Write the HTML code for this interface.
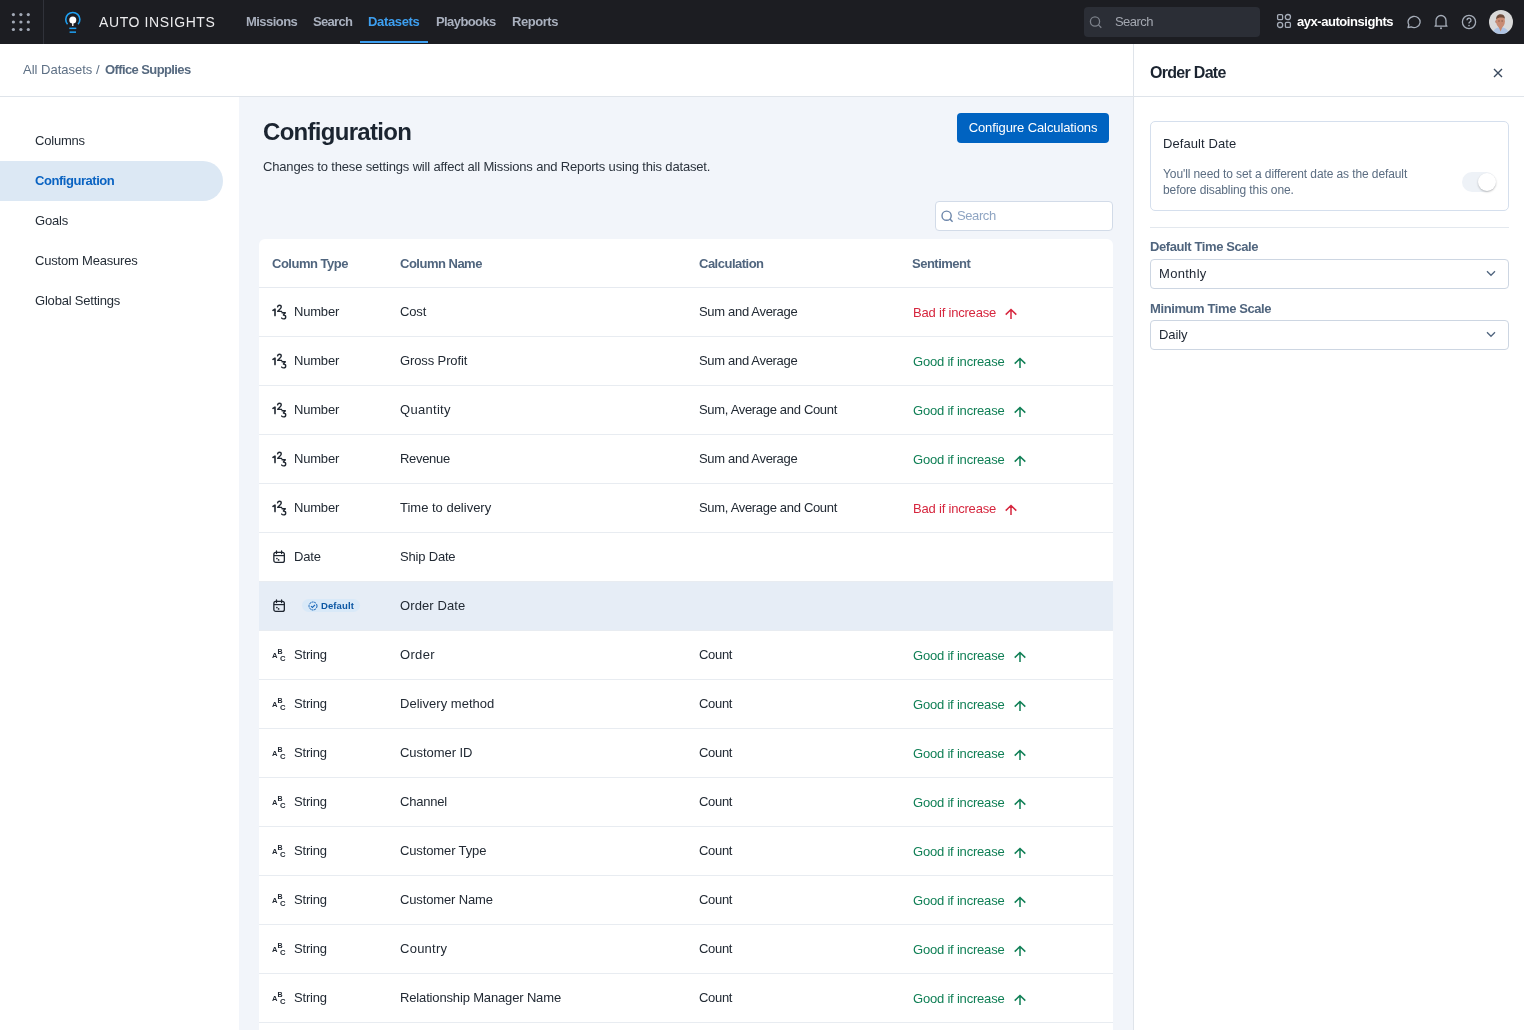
<!DOCTYPE html>
<html><head><meta charset="utf-8">
<style>
*{box-sizing:border-box;margin:0;padding:0}
html,body{width:1524px;height:1030px;overflow:hidden;background:#fff;font-family:"Liberation Sans",sans-serif;color:#2a323c}
.abs{position:absolute}
#nav{position:absolute;left:0;top:0;width:1524px;height:44px;background:#1c1d22}
#nav .sep{position:absolute;left:43px;top:0;width:1px;height:44px;background:#30323a}
.dot{position:absolute;width:3.2px;height:3.2px;border-radius:50%;background:#a2a9b6}
.brand{position:absolute;left:99px;top:13px;font-size:14px;line-height:18px;letter-spacing:0.6px;color:#ececee;white-space:nowrap}
.mi{position:absolute;top:13px;font-size:13px;font-weight:700;line-height:18px;color:#a9b0be;white-space:nowrap;letter-spacing:-0.5px}
.mi.act{color:#3d9ff0}
.uline{position:absolute;left:360px;top:41px;width:68px;height:2px;background:#3d9ff0}
.nsearch{position:absolute;left:1084px;top:7px;width:176px;height:30px;border-radius:4px;background:#2b2e36}
.nsearch span{position:absolute;left:31px;top:6px;font-size:13px;line-height:18px;color:#a3a7b0;letter-spacing:-0.55px}
.org{position:absolute;left:1297px;top:13px;font-size:13px;font-weight:700;line-height:18px;color:#fff;letter-spacing:-0.45px;white-space:nowrap}
#crumb{position:absolute;left:0;top:44px;width:1524px;height:53px;background:#fff;border-bottom:1px solid #dfe4ea}
.cr{position:absolute;top:16px;font-size:13px;line-height:18px;white-space:nowrap;color:#5e7085}
#side{position:absolute;left:0;top:97px;width:239px;height:933px;background:#fff}
.si{position:absolute;left:35px;font-size:13px;line-height:40px;height:40px;color:#252d37;white-space:nowrap;letter-spacing:-0.2px}
.pill{position:absolute;left:0;top:64px;width:223px;height:40px;background:#dce8f4;border-radius:0 20px 20px 0}
.si.act{color:#0a63c2;font-weight:700;letter-spacing:-0.45px}
#main{position:absolute;left:239px;top:97px;width:894px;height:933px;background:#f2f5fa}
h1{position:absolute;left:263px;top:117px;font-size:24px;line-height:30px;font-weight:700;color:#1b2430;letter-spacing:-0.7px;white-space:nowrap}
.sub{position:absolute;left:263px;top:158px;font-size:13px;line-height:18px;color:#2b333d;letter-spacing:-0.165px;white-space:nowrap}
.btn{position:absolute;left:957px;top:113px;width:152px;height:30px;border-radius:4px;background:#0063c1;color:#fff;font-size:13px;line-height:30px;text-align:center;letter-spacing:-0.1px}
.msearch{position:absolute;left:935px;top:201px;width:178px;height:30px;border-radius:4px;background:#fff;border:1px solid #d2dbe8}
.msearch span{position:absolute;left:21px;top:5px;font-size:13px;line-height:18px;color:#8fa5c3;letter-spacing:-0.4px}
.card{position:absolute;left:259px;top:239px;width:854px;height:900px;background:#fff;border-radius:6px}
.th{position:absolute;top:255px;font-size:13px;font-weight:700;line-height:18px;color:#50657e;white-space:nowrap;letter-spacing:-0.5px}
.hb{position:absolute;left:259px;top:287px;width:854px;height:1px;background:#e6eaf0}
.row{position:absolute;left:259px;width:854px;height:49px;border-bottom:1px solid #e8ecf1;font-size:13px;color:#222a34;white-space:nowrap;letter-spacing:-0.2px}
.row.hl{background:#e6edf6}
.row>div{position:absolute;top:0;height:48px;line-height:48px}
.c1{left:13px}.c2{left:141px}.c3{left:440px;letter-spacing:-0.32px}.c4{left:654px}
.ti{position:absolute;left:0;top:16px}
.tt{position:absolute;left:22px;top:0}
.badge{position:absolute;left:30px;top:17px;height:13px;width:58px;border-radius:7px;background:#d9e9f8;color:#0c57a3;font-size:9.5px;font-weight:700;line-height:13px;letter-spacing:0.1px}
.badge svg{position:absolute;left:6px;top:2px}
.badge{padding-left:19px}
.sent.bad{color:#d6263e}.sent.good{color:#0f7f55}
.arr{display:inline-block;vertical-align:-2.5px;margin-left:9.3px}
.row>.c4{top:1px}
#panel{position:absolute;left:1133px;top:44px;width:391px;height:986px;background:#fff;border-left:1px solid #dfe4ea}
.ptitle{position:absolute;left:1150px;top:63px;font-size:16px;font-weight:700;line-height:20px;color:#1b2430;letter-spacing:-0.7px;white-space:nowrap}
.pcard{position:absolute;left:1150px;top:121px;width:359px;height:90px;border:1px solid #d5dfed;border-radius:5px}
.pct{position:absolute;left:1163px;top:135px;font-size:13px;line-height:18px;color:#1e2632;white-space:nowrap;letter-spacing:0.08px}
.pcd{position:absolute;left:1163px;top:166px;font-size:12px;line-height:16px;color:#5b6d82;letter-spacing:-0.1px;white-space:nowrap}
.tog{position:absolute;left:1462px;top:172px;width:34px;height:20px;border-radius:10px;background:#eef2f7}
.knob{position:absolute;left:1478px;top:173px;width:18px;height:18px;border-radius:50%;background:#fff;box-shadow:0 1px 2px rgba(0,0,0,.25)}
.pdiv{position:absolute;left:1150px;top:227px;width:359px;height:1px;background:#e3e8ee}
.plab{position:absolute;left:1150px;font-size:13px;font-weight:700;line-height:18px;color:#50657e;white-space:nowrap;letter-spacing:-0.4px}
.sel{position:absolute;left:1150px;width:359px;height:30px;border:1px solid #cdd6e2;border-radius:4px;background:#fff}
.sel span{position:absolute;left:8px;top:5px;font-size:13px;line-height:18px;color:#1e2632;letter-spacing:-0.1px}
.sel svg{position:absolute;left:335px;top:10px}
</style></head><body>
<div id="wrap" style="position:absolute;left:0;top:0;width:1524px;height:1030px;will-change:transform">
<div id="nav">
  <svg class="abs" style="left:0;top:0" width="44" height="44" viewBox="0 0 44 44" fill="#a2a9b6"><circle cx="13.4" cy="14.6" r="1.6"/><circle cx="20.9" cy="14.6" r="1.6"/><circle cx="28.3" cy="14.6" r="1.6"/><circle cx="13.4" cy="22" r="1.6"/><circle cx="20.9" cy="22" r="1.6"/><circle cx="28.3" cy="22" r="1.6"/><circle cx="13.4" cy="29.5" r="1.6"/><circle cx="20.9" cy="29.5" r="1.6"/><circle cx="28.3" cy="29.5" r="1.6"/></svg>
  <div class="sep"></div>
  <svg class="abs" style="left:62px;top:8px" width="22" height="28" viewBox="0 0 22 28">
    <path d="M5.55 16.2 A7.05 7.05 0 1 1 16.05 16.2" fill="none" stroke="#1ea0f2" stroke-width="1.6"/>
    <circle cx="10.8" cy="12.1" r="3.5" fill="#fff"/>
    <rect x="10.15" y="13" width="1.3" height="5" fill="#fff"/>
    <rect x="7.3" y="19.6" width="7" height="1.5" fill="#1ea0f2"/>
    <rect x="7.6" y="23.4" width="6.4" height="1.5" fill="#1ea0f2"/>
  </svg>
  <div class="brand">AUTO INSIGHTS</div>
  <div class="mi" style="left:246px;letter-spacing:-0.55px">Missions</div>
  <div class="mi" style="left:313px;letter-spacing:-0.68px">Search</div>
  <div class="mi act" style="left:368px;letter-spacing:-0.34px">Datasets</div>
  <div class="mi" style="left:436px;letter-spacing:-0.59px">Playbooks</div>
  <div class="mi" style="left:512px;letter-spacing:-0.46px">Reports</div>
  <div class="uline"></div>
  <div class="nsearch">
    <svg class="abs" style="left:5px;top:8px" width="14" height="14" viewBox="0 0 14 14"><circle cx="6" cy="6.5" r="4.6" fill="none" stroke="#7c818a" stroke-width="1.3"/><path d="M9.4 9.9L12.3 12.8" stroke="#7c818a" stroke-width="1.3"/></svg>
    <span>Search</span>
  </div>
  <svg class="abs" style="left:1276px;top:13px" width="16" height="16" viewBox="0 0 16 16">
    <rect x="1.6" y="1.6" width="5" height="5" rx="1.2" fill="none" stroke="#a6adb9" stroke-width="1.3"/>
    <circle cx="11.9" cy="4.1" r="2.6" fill="none" stroke="#a6adb9" stroke-width="1.3"/>
    <circle cx="4.1" cy="11.9" r="2.6" fill="none" stroke="#a6adb9" stroke-width="1.3"/>
    <rect x="9.4" y="9.4" width="5" height="5" rx="1.2" fill="none" stroke="#a6adb9" stroke-width="1.3"/>
  </svg>
  <div class="org">ayx-autoinsights</div>
  <svg class="abs" style="left:1405px;top:14px" width="16" height="16" viewBox="0 0 16 16"><path d="M3 13.5L3.9 10.8A6 5.6 0 1 1 6.2 12.9Z" fill="none" stroke="#a6adb9" stroke-width="1.3" stroke-linejoin="round"/></svg>
  <svg class="abs" style="left:1433px;top:13px" width="16" height="17" viewBox="0 0 16 17"><path d="M3 12.2V7.5A5 5 0 0 1 13 7.5V12.2L14 13.2H2Z" fill="none" stroke="#a6adb9" stroke-width="1.3" stroke-linejoin="round"/><circle cx="8" cy="15.2" r="1" fill="#a6adb9"/></svg>
  <svg class="abs" style="left:1461px;top:14px" width="16" height="16" viewBox="0 0 16 16"><circle cx="8" cy="8" r="6.6" fill="none" stroke="#a6adb9" stroke-width="1.3"/><path d="M6 6.3A2 2 0 1 1 8.7 8.1C8.1 8.4 8 8.8 8 9.6" fill="none" stroke="#a6adb9" stroke-width="1.3"/><circle cx="8" cy="11.6" r="0.8" fill="#a6adb9"/></svg>
  <svg class="abs" style="left:1489px;top:10px" width="24" height="24" viewBox="0 0 24 24">
    <defs><clipPath id="av"><circle cx="12" cy="12" r="12"/></clipPath></defs>
    <g clip-path="url(#av)">
      <rect width="24" height="24" fill="#d9d9d9"/>
      <path d="M3 24.5C4 19.8 7 17.2 11.5 17.2S19.5 19.8 20.5 24.5Z" fill="#aec3e3"/>
      <path d="M9.3 16L11.6 21.5L13.8 16Z" fill="#c8876c"/>
      <ellipse cx="7.3" cy="11.6" rx="1" ry="1.5" fill="#b47a62"/>
      <ellipse cx="11.5" cy="11.2" rx="4.4" ry="6.3" fill="#c98b72"/>
      <path d="M7.1 9.2C7.2 5.6 9.2 4.2 11.6 4.2S15.9 5.6 16 8.8C14.6 7 9.2 6.8 7.1 9.2Z" fill="#6e4c3b"/>
      <path d="M9.2 11H10.8M12.4 11H14" stroke="#7a5040" stroke-width="0.8"/>
    </g>
  </svg>
</div>

<div id="crumb"></div>
<div class="cr" style="left:23px;top:61px">All Datasets</div>
<div class="cr" style="left:96px;top:61px">/</div>
<div class="cr" style="left:105px;top:61px;font-weight:700;color:#56697f;letter-spacing:-0.6px">Office Supplies</div>

<div id="side">
  <div class="si" style="top:24px">Columns</div>
  <div class="pill"></div>
  <div class="si act" style="top:64px">Configuration</div>
  <div class="si" style="top:104px">Goals</div>
  <div class="si" style="top:144px">Custom Measures</div>
  <div class="si" style="top:184px">Global Settings</div>
</div>

<div id="main"></div>
<h1>Configuration</h1>
<div class="sub">Changes to these settings will affect all Missions and Reports using this dataset.</div>
<div class="btn">Configure Calculations</div>
<div class="msearch">
  <svg class="abs" style="left:5px;top:8px" width="13" height="13" viewBox="0 0 13 13"><circle cx="5.6" cy="5.7" r="4.6" fill="none" stroke="#6c86aa" stroke-width="1.4"/><path d="M8.9 9L11.6 11.7" stroke="#6c86aa" stroke-width="1.5"/></svg>
  <span>Search</span>
</div>

<div class="card"></div>
<div class="th" style="left:272px">Column Type</div>
<div class="th" style="left:400px">Column Name</div>
<div class="th" style="left:699px">Calculation</div>
<div class="th" style="left:912px">Sentiment</div>
<div class="hb"></div>
<div class="row" style="top:288px"><div class="c1"><svg class="ti" width="16" height="16" viewBox="0 0 16 16" fill="none" stroke="#1f2630" stroke-linecap="round" stroke-linejoin="round"><path d="M1 6.4L3 5.1V11.6" stroke-width="1.6"/><path d="M5.6 2.9C5.8 1.7 6.5 1.2 7.5 1.2C8.5 1.2 9.3 1.9 9.3 2.9C9.3 4.1 7.9 5.2 5.7 7.4H9.6" stroke-width="1.4"/><path d="M10 8.8H13.3L11.4 11C12.8 11 13.7 11.8 13.7 13C13.7 14.2 12.7 14.9 11.6 14.9C10.8 14.9 10.1 14.6 9.7 14.1" stroke-width="1.4"/></svg><span class="tt">Number</span></div><div class="c2" style="letter-spacing:-0.15px">Cost</div><div class="c3">Sum and Average</div><div class="c4"><span class="sent bad">Bad if increase</span><svg class="arr" width="12" height="12" viewBox="0 0 12 12"><path d="M6 11V1.6M0.7 6.6L6 1.5L11.3 6.6" fill="none" stroke="#d6263e" stroke-width="1.5"/></svg></div></div>
<div class="row" style="top:337px"><div class="c1"><svg class="ti" width="16" height="16" viewBox="0 0 16 16" fill="none" stroke="#1f2630" stroke-linecap="round" stroke-linejoin="round"><path d="M1 6.4L3 5.1V11.6" stroke-width="1.6"/><path d="M5.6 2.9C5.8 1.7 6.5 1.2 7.5 1.2C8.5 1.2 9.3 1.9 9.3 2.9C9.3 4.1 7.9 5.2 5.7 7.4H9.6" stroke-width="1.4"/><path d="M10 8.8H13.3L11.4 11C12.8 11 13.7 11.8 13.7 13C13.7 14.2 12.7 14.9 11.6 14.9C10.8 14.9 10.1 14.6 9.7 14.1" stroke-width="1.4"/></svg><span class="tt">Number</span></div><div class="c2" style="letter-spacing:-0.117px">Gross Profit</div><div class="c3">Sum and Average</div><div class="c4"><span class="sent good">Good if increase</span><svg class="arr" width="12" height="12" viewBox="0 0 12 12"><path d="M6 11V1.6M0.7 6.6L6 1.5L11.3 6.6" fill="none" stroke="#0f7f55" stroke-width="1.5"/></svg></div></div>
<div class="row" style="top:386px"><div class="c1"><svg class="ti" width="16" height="16" viewBox="0 0 16 16" fill="none" stroke="#1f2630" stroke-linecap="round" stroke-linejoin="round"><path d="M1 6.4L3 5.1V11.6" stroke-width="1.6"/><path d="M5.6 2.9C5.8 1.7 6.5 1.2 7.5 1.2C8.5 1.2 9.3 1.9 9.3 2.9C9.3 4.1 7.9 5.2 5.7 7.4H9.6" stroke-width="1.4"/><path d="M10 8.8H13.3L11.4 11C12.8 11 13.7 11.8 13.7 13C13.7 14.2 12.7 14.9 11.6 14.9C10.8 14.9 10.1 14.6 9.7 14.1" stroke-width="1.4"/></svg><span class="tt">Number</span></div><div class="c2" style="letter-spacing:0.3px">Quantity</div><div class="c3">Sum, Average and Count</div><div class="c4"><span class="sent good">Good if increase</span><svg class="arr" width="12" height="12" viewBox="0 0 12 12"><path d="M6 11V1.6M0.7 6.6L6 1.5L11.3 6.6" fill="none" stroke="#0f7f55" stroke-width="1.5"/></svg></div></div>
<div class="row" style="top:435px"><div class="c1"><svg class="ti" width="16" height="16" viewBox="0 0 16 16" fill="none" stroke="#1f2630" stroke-linecap="round" stroke-linejoin="round"><path d="M1 6.4L3 5.1V11.6" stroke-width="1.6"/><path d="M5.6 2.9C5.8 1.7 6.5 1.2 7.5 1.2C8.5 1.2 9.3 1.9 9.3 2.9C9.3 4.1 7.9 5.2 5.7 7.4H9.6" stroke-width="1.4"/><path d="M10 8.8H13.3L11.4 11C12.8 11 13.7 11.8 13.7 13C13.7 14.2 12.7 14.9 11.6 14.9C10.8 14.9 10.1 14.6 9.7 14.1" stroke-width="1.4"/></svg><span class="tt">Number</span></div><div class="c2" style="letter-spacing:-0.314px">Revenue</div><div class="c3">Sum and Average</div><div class="c4"><span class="sent good">Good if increase</span><svg class="arr" width="12" height="12" viewBox="0 0 12 12"><path d="M6 11V1.6M0.7 6.6L6 1.5L11.3 6.6" fill="none" stroke="#0f7f55" stroke-width="1.5"/></svg></div></div>
<div class="row" style="top:484px"><div class="c1"><svg class="ti" width="16" height="16" viewBox="0 0 16 16" fill="none" stroke="#1f2630" stroke-linecap="round" stroke-linejoin="round"><path d="M1 6.4L3 5.1V11.6" stroke-width="1.6"/><path d="M5.6 2.9C5.8 1.7 6.5 1.2 7.5 1.2C8.5 1.2 9.3 1.9 9.3 2.9C9.3 4.1 7.9 5.2 5.7 7.4H9.6" stroke-width="1.4"/><path d="M10 8.8H13.3L11.4 11C12.8 11 13.7 11.8 13.7 13C13.7 14.2 12.7 14.9 11.6 14.9C10.8 14.9 10.1 14.6 9.7 14.1" stroke-width="1.4"/></svg><span class="tt">Number</span></div><div class="c2" style="letter-spacing:-0.006px">Time to delivery</div><div class="c3">Sum, Average and Count</div><div class="c4"><span class="sent bad">Bad if increase</span><svg class="arr" width="12" height="12" viewBox="0 0 12 12"><path d="M6 11V1.6M0.7 6.6L6 1.5L11.3 6.6" fill="none" stroke="#d6263e" stroke-width="1.5"/></svg></div></div>
<div class="row" style="top:533px"><div class="c1"><svg class="ti" width="16" height="16" viewBox="0 0 16 16" fill="none" stroke="#1f2630"><rect x="1.85" y="3.45" width="10.5" height="10" rx="2" stroke-width="1.3"/><path d="M2 6.6H12.2" stroke-width="1.2"/><path d="M4.5 1.9V4.6M9.6 1.9V4.6" stroke-width="1.3" stroke-linecap="round"/><circle cx="4.9" cy="9.5" r="0.85" fill="#1f2630" stroke="none"/><circle cx="6.6" cy="10.9" r="0.85" fill="#1f2630" stroke="none"/></svg><span class="tt">Date</span></div><div class="c2" style="letter-spacing:-0.189px">Ship Date</div><div class="c3"></div><div class="c4"></div></div>
<div class="row hl" style="top:582px"><div class="c1"><svg class="ti" width="16" height="16" viewBox="0 0 16 16" fill="none" stroke="#1f2630"><rect x="1.85" y="3.45" width="10.5" height="10" rx="2" stroke-width="1.3"/><path d="M2 6.6H12.2" stroke-width="1.2"/><path d="M4.5 1.9V4.6M9.6 1.9V4.6" stroke-width="1.3" stroke-linecap="round"/><circle cx="4.9" cy="9.5" r="0.85" fill="#1f2630" stroke="none"/><circle cx="6.6" cy="10.9" r="0.85" fill="#1f2630" stroke="none"/></svg><span class="badge"><svg width="10" height="10" viewBox="0 0 10 10"><circle cx="5" cy="5" r="4" fill="none" stroke="#1565b8" stroke-width="1" stroke-dasharray="2.2 0.6"/><path d="M3 5.1L4.4 6.4L7 3.8" fill="none" stroke="#1565b8" stroke-width="1.1"/></svg>Default</span></div><div class="c2" style="letter-spacing:0.11px">Order Date</div><div class="c3"></div><div class="c4"></div></div>
<div class="row" style="top:631px"><div class="c1"><svg class="ti" width="16" height="16" viewBox="0 0 16 16"><text x="0.1" y="10.6" font-size="7.6" font-weight="700" font-family="Liberation Sans" fill="#1f2630">A</text><text x="5.5" y="7" font-size="7" font-weight="700" font-family="Liberation Sans" fill="#1f2630">B</text><text x="7.9" y="13.8" font-size="7.7" font-weight="700" font-family="Liberation Sans" fill="#1f2630">C</text></svg><span class="tt">String</span></div><div class="c2" style="letter-spacing:0.34px">Order</div><div class="c3">Count</div><div class="c4"><span class="sent good">Good if increase</span><svg class="arr" width="12" height="12" viewBox="0 0 12 12"><path d="M6 11V1.6M0.7 6.6L6 1.5L11.3 6.6" fill="none" stroke="#0f7f55" stroke-width="1.5"/></svg></div></div>
<div class="row" style="top:680px"><div class="c1"><svg class="ti" width="16" height="16" viewBox="0 0 16 16"><text x="0.1" y="10.6" font-size="7.6" font-weight="700" font-family="Liberation Sans" fill="#1f2630">A</text><text x="5.5" y="7" font-size="7" font-weight="700" font-family="Liberation Sans" fill="#1f2630">B</text><text x="7.9" y="13.8" font-size="7.7" font-weight="700" font-family="Liberation Sans" fill="#1f2630">C</text></svg><span class="tt">String</span></div><div class="c2" style="letter-spacing:0.027px">Delivery method</div><div class="c3">Count</div><div class="c4"><span class="sent good">Good if increase</span><svg class="arr" width="12" height="12" viewBox="0 0 12 12"><path d="M6 11V1.6M0.7 6.6L6 1.5L11.3 6.6" fill="none" stroke="#0f7f55" stroke-width="1.5"/></svg></div></div>
<div class="row" style="top:729px"><div class="c1"><svg class="ti" width="16" height="16" viewBox="0 0 16 16"><text x="0.1" y="10.6" font-size="7.6" font-weight="700" font-family="Liberation Sans" fill="#1f2630">A</text><text x="5.5" y="7" font-size="7" font-weight="700" font-family="Liberation Sans" fill="#1f2630">B</text><text x="7.9" y="13.8" font-size="7.7" font-weight="700" font-family="Liberation Sans" fill="#1f2630">C</text></svg><span class="tt">String</span></div><div class="c2" style="letter-spacing:-0.045px">Customer ID</div><div class="c3">Count</div><div class="c4"><span class="sent good">Good if increase</span><svg class="arr" width="12" height="12" viewBox="0 0 12 12"><path d="M6 11V1.6M0.7 6.6L6 1.5L11.3 6.6" fill="none" stroke="#0f7f55" stroke-width="1.5"/></svg></div></div>
<div class="row" style="top:778px"><div class="c1"><svg class="ti" width="16" height="16" viewBox="0 0 16 16"><text x="0.1" y="10.6" font-size="7.6" font-weight="700" font-family="Liberation Sans" fill="#1f2630">A</text><text x="5.5" y="7" font-size="7" font-weight="700" font-family="Liberation Sans" fill="#1f2630">B</text><text x="7.9" y="13.8" font-size="7.7" font-weight="700" font-family="Liberation Sans" fill="#1f2630">C</text></svg><span class="tt">String</span></div><div class="c2" style="letter-spacing:-0.229px">Channel</div><div class="c3">Count</div><div class="c4"><span class="sent good">Good if increase</span><svg class="arr" width="12" height="12" viewBox="0 0 12 12"><path d="M6 11V1.6M0.7 6.6L6 1.5L11.3 6.6" fill="none" stroke="#0f7f55" stroke-width="1.5"/></svg></div></div>
<div class="row" style="top:827px"><div class="c1"><svg class="ti" width="16" height="16" viewBox="0 0 16 16"><text x="0.1" y="10.6" font-size="7.6" font-weight="700" font-family="Liberation Sans" fill="#1f2630">A</text><text x="5.5" y="7" font-size="7" font-weight="700" font-family="Liberation Sans" fill="#1f2630">B</text><text x="7.9" y="13.8" font-size="7.7" font-weight="700" font-family="Liberation Sans" fill="#1f2630">C</text></svg><span class="tt">String</span></div><div class="c2" style="letter-spacing:-0.123px">Customer Type</div><div class="c3">Count</div><div class="c4"><span class="sent good">Good if increase</span><svg class="arr" width="12" height="12" viewBox="0 0 12 12"><path d="M6 11V1.6M0.7 6.6L6 1.5L11.3 6.6" fill="none" stroke="#0f7f55" stroke-width="1.5"/></svg></div></div>
<div class="row" style="top:876px"><div class="c1"><svg class="ti" width="16" height="16" viewBox="0 0 16 16"><text x="0.1" y="10.6" font-size="7.6" font-weight="700" font-family="Liberation Sans" fill="#1f2630">A</text><text x="5.5" y="7" font-size="7" font-weight="700" font-family="Liberation Sans" fill="#1f2630">B</text><text x="7.9" y="13.8" font-size="7.7" font-weight="700" font-family="Liberation Sans" fill="#1f2630">C</text></svg><span class="tt">String</span></div><div class="c2" style="letter-spacing:-0.146px">Customer Name</div><div class="c3">Count</div><div class="c4"><span class="sent good">Good if increase</span><svg class="arr" width="12" height="12" viewBox="0 0 12 12"><path d="M6 11V1.6M0.7 6.6L6 1.5L11.3 6.6" fill="none" stroke="#0f7f55" stroke-width="1.5"/></svg></div></div>
<div class="row" style="top:925px"><div class="c1"><svg class="ti" width="16" height="16" viewBox="0 0 16 16"><text x="0.1" y="10.6" font-size="7.6" font-weight="700" font-family="Liberation Sans" fill="#1f2630">A</text><text x="5.5" y="7" font-size="7" font-weight="700" font-family="Liberation Sans" fill="#1f2630">B</text><text x="7.9" y="13.8" font-size="7.7" font-weight="700" font-family="Liberation Sans" fill="#1f2630">C</text></svg><span class="tt">String</span></div><div class="c2" style="letter-spacing:0.257px">Country</div><div class="c3">Count</div><div class="c4"><span class="sent good">Good if increase</span><svg class="arr" width="12" height="12" viewBox="0 0 12 12"><path d="M6 11V1.6M0.7 6.6L6 1.5L11.3 6.6" fill="none" stroke="#0f7f55" stroke-width="1.5"/></svg></div></div>
<div class="row" style="top:974px"><div class="c1"><svg class="ti" width="16" height="16" viewBox="0 0 16 16"><text x="0.1" y="10.6" font-size="7.6" font-weight="700" font-family="Liberation Sans" fill="#1f2630">A</text><text x="5.5" y="7" font-size="7" font-weight="700" font-family="Liberation Sans" fill="#1f2630">B</text><text x="7.9" y="13.8" font-size="7.7" font-weight="700" font-family="Liberation Sans" fill="#1f2630">C</text></svg><span class="tt">String</span></div><div class="c2" style="letter-spacing:-0.152px">Relationship Manager Name</div><div class="c3">Count</div><div class="c4"><span class="sent good">Good if increase</span><svg class="arr" width="12" height="12" viewBox="0 0 12 12"><path d="M6 11V1.6M0.7 6.6L6 1.5L11.3 6.6" fill="none" stroke="#0f7f55" stroke-width="1.5"/></svg></div></div>
<div class="row" style="top:1023px"><div class="c1"><svg class="ti" width="16" height="16" viewBox="0 0 16 16"><text x="0.1" y="10.6" font-size="7.6" font-weight="700" font-family="Liberation Sans" fill="#1f2630">A</text><text x="5.5" y="7" font-size="7" font-weight="700" font-family="Liberation Sans" fill="#1f2630">B</text><text x="7.9" y="13.8" font-size="7.7" font-weight="700" font-family="Liberation Sans" fill="#1f2630">C</text></svg><span class="tt">String</span></div><div class="c2" style="letter-spacing:-0.2px">Sales Region</div><div class="c3">Count</div><div class="c4"><span class="sent good">Good if increase</span><svg class="arr" width="12" height="12" viewBox="0 0 12 12"><path d="M6 11V1.6M0.7 6.6L6 1.5L11.3 6.6" fill="none" stroke="#0f7f55" stroke-width="1.5"/></svg></div></div>

<div id="panel"></div>
<div class="abs" style="left:1134px;top:96px;width:390px;height:1px;background:#dfe4ea"></div>
<div class="ptitle">Order Date</div>
<svg class="abs" style="left:1493px;top:68px" width="10" height="10" viewBox="0 0 10 10"><path d="M1 1L9 9M9 1L1 9" stroke="#3a4a5e" stroke-width="1.4"/></svg>
<div class="pcard"></div>
<div class="pct">Default Date</div>
<div class="pcd">You'll need to set a different date as the default<br>before disabling this one.</div>
<div class="tog"></div><div class="knob"></div>
<div class="pdiv"></div>
<div class="plab" style="top:238px">Default Time Scale</div>
<div class="sel" style="top:259px"><span style="letter-spacing:0.3px">Monthly</span><svg width="10" height="7" viewBox="0 0 10 7"><path d="M1 1.3L5 5.3L9 1.3" fill="none" stroke="#50657e" stroke-width="1.3"/></svg></div>
<div class="plab" style="top:300px">Minimum Time Scale</div>
<div class="sel" style="top:320px"><span>Daily</span><svg width="10" height="7" viewBox="0 0 10 7"><path d="M1 1.3L5 5.3L9 1.3" fill="none" stroke="#50657e" stroke-width="1.3"/></svg></div>
</div>
</body></html>
